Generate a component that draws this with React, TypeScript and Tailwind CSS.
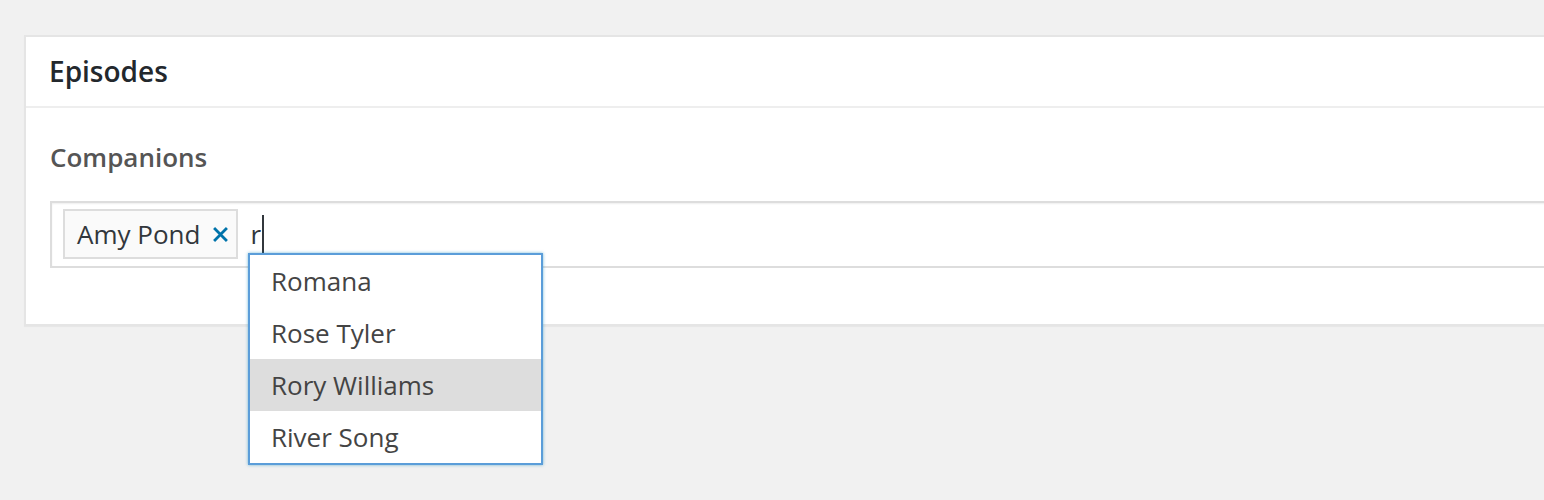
import { useState } from 'react';

const companions = ['Romana', 'Rose Tyler', 'Rory Williams', 'River Song'];

export default function App() {
  const [active] = useState(2);

  return (
    <div
      className="min-h-[500px] w-full overflow-hidden bg-[#f1f1f1] pt-[35px]"
      style={{ fontFamily: '"Open Sans", "Liberation Sans", sans-serif' }}
    >
      <div className="ml-[24px] w-[1600px] border-2 border-[#e5e5e5] bg-white shadow-[0_1px_1px_rgba(0,0,0,0.04)]">
        <div className="h-[71px] border-b-2 border-[#eeeeee] px-[23px]">
          <h2 className="text-[28px] font-semibold leading-[69px] text-[#23282d]">Episodes</h2>
        </div>

        <div className="px-[24px] pb-[56px] pt-[31px]">
          <label className="block text-[26px] font-semibold leading-[36px] text-[#555]">Companions</label>

          <div className="relative mt-[26px] flex h-[67px] items-start border-2 border-[#dddddd] pl-[11px] pt-[6px] shadow-[inset_0_1px_2px_rgba(0,0,0,0.07)]">
            <span className="flex h-[50px] items-center border-2 border-[#dddddd] bg-[#fafafa] pl-[12px] pr-[8px] text-[26px] leading-[46px] text-[#32373c]">
              Amy Pond
              <svg viewBox="0 0 14 14" className="ml-[13px] h-[15px] w-[15px]" aria-hidden>
                <path d="M1 1 L13 13 M13 1 L1 13" stroke="#0073aa" strokeWidth="2.6" />
              </svg>
            </span>
            <span className="ml-[12px] flex h-[50px] items-center text-[26px] leading-[46px] text-[#32373c]">
              r
              <span className="ml-[1px] inline-block h-[39px] w-[2px] bg-[#32373c]" />
            </span>

            <ul className="absolute left-[196px] top-[50px] z-10 w-[295px] border-2 border-[#5b9dd9] bg-white shadow-[0_0_3px_rgba(30,140,190,0.6)]">
              {companions.map((name, i) => (
                <li
                  key={name}
                  className={`h-[52px] pl-[21px] text-[26px] leading-[52px] text-[#444] ${
                    i === active ? 'bg-[#dddddd]' : 'bg-white'
                  }`}
                >
                  {name}
                </li>
              ))}
            </ul>
          </div>
        </div>
      </div>
    </div>
  );
}
